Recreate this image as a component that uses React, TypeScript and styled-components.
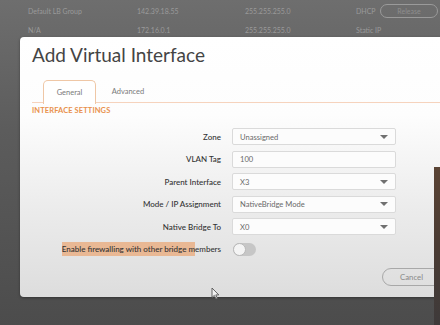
import React from "react";
import styled, { createGlobalStyle } from "styled-components";

const Global = createGlobalStyle`
  html, body { margin: 0; padding: 0; }
  body { width: 440px; height: 325px; overflow: hidden; font-family: Lato, "Open Sans", sans-serif; }
`;

const Page = styled.div`
  position: relative;
  width: 440px;
  height: 325px;
  overflow: hidden;
  background: linear-gradient(180deg, #6e6e6e 0%, #5c5c5c 40%, #4c4c4c 100%);
`;

const BgTable = styled.div`
  display: flex;
  flex-direction: column;
  padding-top: 1px;
`;

const BgRow = styled.div`
  display: grid;
  grid-template-columns: 109px 108px 111px 24px 70px;
  align-items: center;
  height: 19px;
  padding-left: 28px;
  font-size: 7px;
  color: #9a9a9a;
  white-space: nowrap;
`;

const ReleaseBtn = styled.div`
  width: 58px;
  height: 14px;
  box-sizing: border-box;
  border: 1px solid #9a9a9a;
  border-radius: 8px;
  display: flex;
  align-items: center;
  justify-content: center;
  color: #8e8e8e;
  font-size: 7px;
`;

const Modal = styled.div`
  position: absolute;
  left: 20px;
  top: 37px;
  width: 440px;
  height: 260px;
  border-radius: 4px;
  background: linear-gradient(180deg, #ffffff 0%, #fdfdfd 30%, #ececec 65%, #dddddd 100%);
  box-shadow: 0 1px 3px rgba(0, 0, 0, 0.35);
  display: flex;
  flex-direction: column;
  padding-left: 12px;
  box-sizing: border-box;
`;

const Title = styled.h1`
  margin: 4px 0 0 0;
  font-family: Lato, sans-serif;
  font-weight: 400;
  font-size: 19px;
  line-height: 28px;
  color: #444;
`;

const TabBar = styled.div`
  display: flex;
  align-items: flex-end;
  margin-top: 10px;
  padding-left: 11px;
  height: 23px;
  border-bottom: 1.5px solid #f6d3bd;
`;

const Tab = styled.div<{ $active?: boolean }>`
  box-sizing: border-box;
  height: ${(p) => (p.$active ? "24px" : "23px")};
  margin-bottom: ${(p) => (p.$active ? "-1.5px" : "0")};
  width: ${(p) => (p.$active ? "53px" : "64px")};
  display: flex;
  align-items: center;
  justify-content: center;
  padding-top: 1px;
  font-size: 7.5px;
  color: #7a7a7a;
  background: ${(p) => (p.$active ? "#fff" : "transparent")};
  border: ${(p) => (p.$active ? "1px solid #efc7a6" : "none")};
  border-bottom: none;
  border-radius: 5px 5px 0 0;
`;

const SectionHeader = styled.div`
  margin-top: 3px;
  font-size: 7.5px;
  font-weight: 700;
  color: #e9914c;
  letter-spacing: 0.1px;
  line-height: 10px;
`;

const Form = styled.div`
  display: grid;
  grid-template-columns: 189px 164px;
  column-gap: 11px;
  row-gap: 5.5px;
  grid-auto-rows: 17px;
  margin-top: 12px;
  align-items: center;
`;

const Label = styled.div`
  text-align: right;
  font-size: 8px;
  color: #333;
  font-weight: 500;
  white-space: nowrap;
`;

const Mark = styled.span`
  background: #e9b894;
  padding: 2px 0;
`;

const Field = styled.div`
  box-sizing: border-box;
  height: 17px;
  border: 1px solid #dadada;
  border-radius: 2px;
  background: #fcfcfc;
  display: flex;
  align-items: center;
  justify-content: space-between;
  padding: 0 7px 0 7px;
  font-size: 7.6px;
  color: #6a6a6a;
`;

const Caret = styled.span`
  width: 0;
  height: 0;
  border-left: 4px solid transparent;
  border-right: 4px solid transparent;
  border-top: 4px solid #707070;
`;

const Toggle = styled.div`
  width: 23px;
  height: 13px;
  border-radius: 7px;
  background: #c6c6c6;
  position: relative;
  margin-left: 1px;
`;

const Knob = styled.div`
  position: absolute;
  left: 0;
  top: 0;
  box-sizing: border-box;
  width: 13px;
  height: 13px;
  border-radius: 50%;
  background: #f4f4f4;
  border: 1px solid #b8b8b8;
`;

const Footer = styled.div`
  display: flex;
  margin-top: 10px;
  padding-left: 350px;
`;

const CancelBtn = styled.div`
  box-sizing: border-box;
  width: 80px;
  height: 18px;
  border: 1px solid #a8a8a8;
  border-radius: 9px;
  display: flex;
  align-items: center;
  padding-left: 17px;
  font-size: 7.8px;
  color: #8a8a8a;
`;

const Webcam = styled.div`
  position: absolute;
  left: 434px;
  top: 167px;
  width: 6px;
  height: 158px;
  background: linear-gradient(180deg, #5a4334 0%, #4a3b33 50%, #3e3a3a 100%);
`;

const Cursor = styled.svg`
  position: absolute;
  left: 211px;
  top: 287px;
`;

const rows: { label: React.ReactNode; value?: string; select?: boolean }[] = [
  { label: "Zone", value: "Unassigned", select: true },
  { label: "VLAN Tag", value: "100" },
  { label: "Parent Interface", value: "X3", select: true },
  { label: "Mode / IP Assignment", value: "NativeBridge Mode", select: true },
  { label: "Native Bridge To", value: "X0", select: true },
];

export default function App() {
  return (
    <>
      <Global />
      <Page>
        <BgTable>
          <BgRow>
            <span>Default LB Group</span>
            <span>142.39.18.55</span>
            <span>255.255.255.0</span>
            <span>DHCP</span>
            <ReleaseBtn>Release</ReleaseBtn>
          </BgRow>
          <BgRow>
            <span>N/A</span>
            <span>172.16.0.1</span>
            <span>255.255.255.0</span>
            <span>Static IP</span>
            <span />
          </BgRow>
        </BgTable>
        <Modal>
          <Title>Add Virtual Interface</Title>
          <TabBar>
            <Tab $active>General</Tab>
            <Tab>Advanced</Tab>
          </TabBar>
          <SectionHeader>INTERFACE SETTINGS</SectionHeader>
          <Form>
            {rows.map((r, i) => (
              <React.Fragment key={i}>
                <Label>{r.label}</Label>
                <Field>
                  <span>{r.value}</span>
                  {r.select && <Caret />}
                </Field>
              </React.Fragment>
            ))}
            <Label>
              <Mark>Enable firewalling with other bridge m</Mark>embers
            </Label>
            <Toggle>
              <Knob />
            </Toggle>
          </Form>
          <Footer>
            <CancelBtn>Cancel</CancelBtn>
          </Footer>
        </Modal>
        <Webcam />
        <Cursor width="9" height="13" viewBox="0 0 9 13">
          <path d="M1 1 L1 10.5 L3.3 8.4 L5 12 L6.4 11.3 L4.8 7.9 L7.8 7.9 Z" fill="#f2f2f2" stroke="#555" strokeWidth="0.9" strokeLinejoin="round" />
        </Cursor>
      </Page>
    </>
  );
}
